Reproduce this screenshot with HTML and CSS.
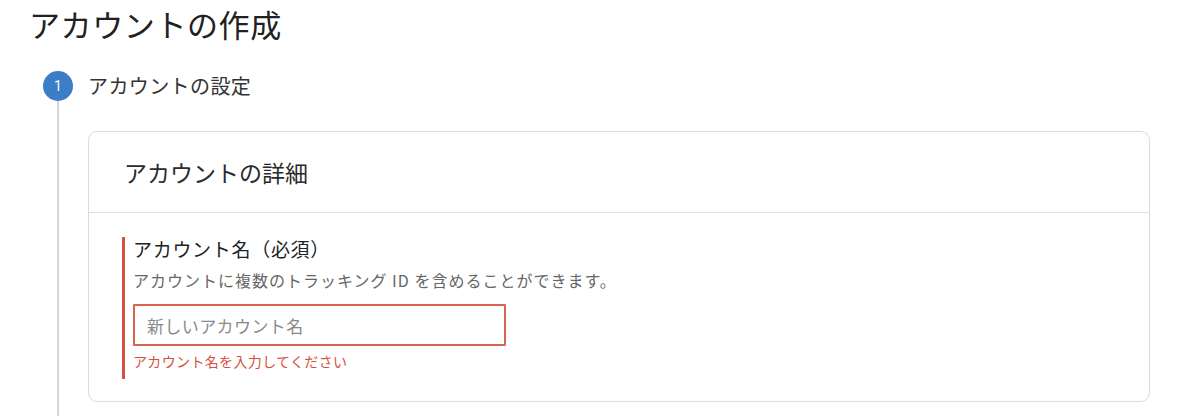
FILE: index.html
```html
<!DOCTYPE html>
<html lang="ja">
<head>
<meta charset="utf-8">
<title>アカウントの作成</title>
<link rel="stylesheet" href="styles.css">
</head>
<body>
<main class="page">
  <h1 class="page-title">アカウントの作成</h1>
  <section class="stepper">
    <div class="step-marker"><span class="step-num">1</span></div>
    <div class="step-title">アカウントの設定</div>
    <div class="step-rail"></div>
    <div class="step-content">
      <div class="card">
        <div class="card-header">アカウントの詳細</div>
        <div class="card-body">
          <div class="field field-error">
            <div class="field-label">アカウント名（必須）</div>
            <div class="field-help">アカウントに複数のトラッキング ID を含めることができます。</div>
            <input class="field-input" type="text" placeholder="新しいアカウント名">
            <div class="field-message">アカウント名を入力してください</div>
          </div>
        </div>
      </div>
    </div>
  </section>
</main>
</body>
</html>
```

FILE: styles.css
```css
html, body {
  margin: 0;
  padding: 0;
  background: #fff;
  height: 100%;
  overflow: hidden;
}

body {
  font-family: "Noto Sans CJK JP", "Noto Sans", Roboto, sans-serif;
  color: #212121;
}

.page {
  padding: 0 50px 0 0;
}

.page-title {
  margin: 0;
  padding-left: 29px;
  font-size: 31px;
  font-weight: 400;
  line-height: 48px;
  letter-spacing: 0.6px;
  color: #212121;
}

.stepper {
  display: grid;
  grid-template-columns: 30px 1fr;
  column-gap: 15px;
  padding-left: 43px;
  margin-top: 23px;
}

.step-marker {
  display: flex;
  align-items: center;
  justify-content: center;
}

.step-num {
  width: 30px;
  height: 30px;
  border-radius: 50%;
  background: #3b7dc6;
  color: #fff;
  font-family: Roboto, "Noto Sans", sans-serif;
  font-size: 14px;
  display: flex;
  align-items: center;
  justify-content: center;
}

.step-title {
  font-size: 20px;
  line-height: 30px;
  letter-spacing: 0.4px;
  color: #333;
}

.step-rail {
  display: flex;
  justify-content: center;
  padding-right: 1px;
}

.step-rail::before {
  content: "";
  width: 2px;
  background: #d4d4d4;
}

.step-content {
  padding: 30px 0 14px;
}

.card {
  border: 1px solid #dcdcdf;
  border-radius: 9px;
  background: #fff;
}

.card-header {
  height: 80px;
  display: flex;
  align-items: center;
  padding-left: 35px;
  font-size: 23px;
  color: #2b2b2b;
  border-bottom: 1px solid #e0e0e0;
}

.card-body {
  padding: 24px 0 22px 33px;
}

.field {
  padding: 0 0 8px 8px;
  display: flex;
  flex-direction: column;
  align-items: flex-start;
}

.field-error {
  border-left: 3px solid #d4513d;
}

.field-label {
  font-size: 19px;
  line-height: 24px;
  letter-spacing: 0.7px;
  color: #222;
}

.field-help {
  margin-top: 8px;
  font-size: 16px;
  line-height: 22px;
  letter-spacing: 1px;
  color: #666;
}

.field-input {
  box-sizing: border-box;
  margin-top: 13px;
  width: 373px;
  height: 42px;
  border: 2px solid #d9644f;
  border-radius: 1px;
  padding: 0 12px;
  font-family: "Noto Sans CJK JP", "Noto Sans", sans-serif;
  font-size: 17px;
  letter-spacing: 0.4px;
  color: #222;
  outline: none;
}

.field-input::placeholder {
  color: #8a8a8a;
}

.field-message {
  margin-top: 5px;
  font-size: 14px;
  line-height: 20px;
  letter-spacing: 0.35px;
  color: #d4513d;
}
```
